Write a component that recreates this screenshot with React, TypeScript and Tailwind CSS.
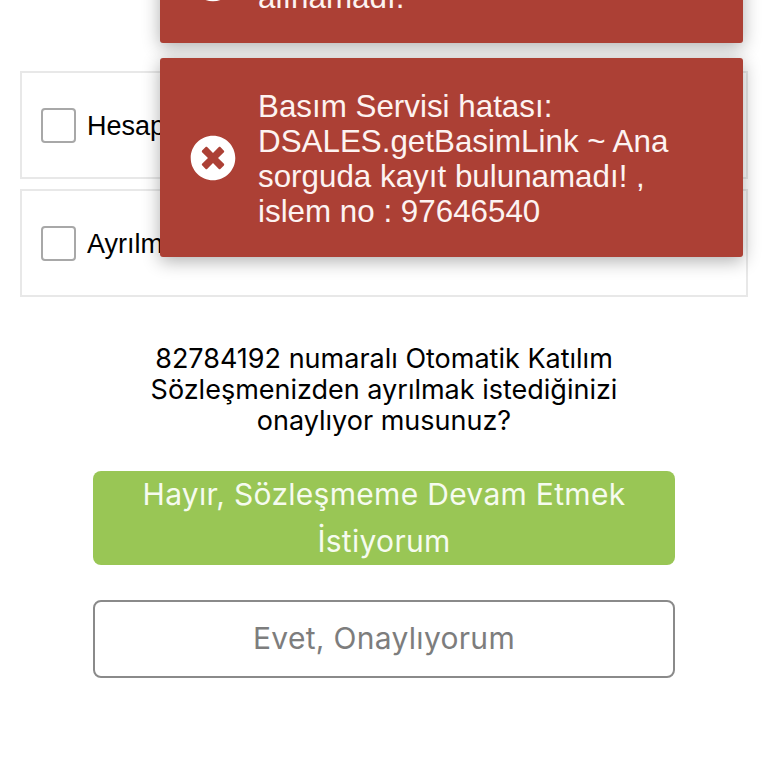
import { FaTimesCircle } from 'react-icons/fa';

const options = ['Hesap bilgilerimi okudum', 'Ayrılma kararımı aldım'];

function Toast({ lines }: { lines: string[] }) {
  return (
    <div className="flex items-center rounded-[3px] bg-[#ac4035] py-[29.5px] pl-[30px] pr-4 font-['Liberation_Sans',sans-serif] text-[31.35px] leading-[35px] text-[#fdf3f1] shadow-[0_4px_18px_rgba(0,0,0,0.32)]">
      <FaTimesCircle className="mr-[22px] h-[46px] w-[46px] shrink-0 text-white" />
      <div className="translate-y-[1px]">
        {lines.map((line) => (
          <div key={line}>{line}</div>
        ))}
      </div>
    </div>
  );
}

export default function App() {
  return (
    <div className="relative h-screen overflow-hidden bg-white font-['Inter',sans-serif] text-black">
      {/* Form */}
      <div className="flex flex-col gap-[10px] px-5 pt-[71px]">
        {options.map((label) => (
          <div key={label} className="flex h-[108px] items-center gap-[11px] border-2 border-[#e8e8e8] pl-[19px] font-['Liberation_Sans',sans-serif] text-[27px]">
            <div className="h-[35px] w-[35px] rounded-[4px] border-2 border-[#a8a8a8] bg-white" />
            <span className="pt-[2px]">{label}</span>
          </div>
        ))}
      </div>

      <p className="mx-auto mt-[46px] w-[520px] text-center text-[27px] leading-[31px]">
        82784192 numaralı Otomatik Katılım Sözleşmenizden ayrılmak istediğinizi onaylıyor musunuz?
      </p>

      {/* Buttons */}
      <div className="mx-[93px] mt-[35px] flex flex-col gap-[35px] text-center text-[30px] tracking-[0.3px]">
        <button className="h-[94px] rounded-[8px] bg-[#99c655] leading-[47px] text-[#f6fbef]">
          Hayır, Sözleşmeme Devam Etmek İstiyorum
        </button>
        <button className="h-[78px] rounded-[8px] border-2 border-[#8a8a8a] bg-white pb-[2px] text-[#7d7d7d]">
          Evet, Onaylıyorum
        </button>
      </div>

      {/* Toasts */}
      <div className="absolute left-[160px] top-[-86px] flex w-[583px] flex-col gap-[15px]">
        <Toast lines={['Sözleşme bilgileri', 'alınamadı.']} />
        <Toast lines={['Basım Servisi hatası:', 'DSALES.getBasimLink ~ Ana', 'sorguda kayıt bulunamadı! ,', 'islem no : 97646540']} />
      </div>
    </div>
  );
}
